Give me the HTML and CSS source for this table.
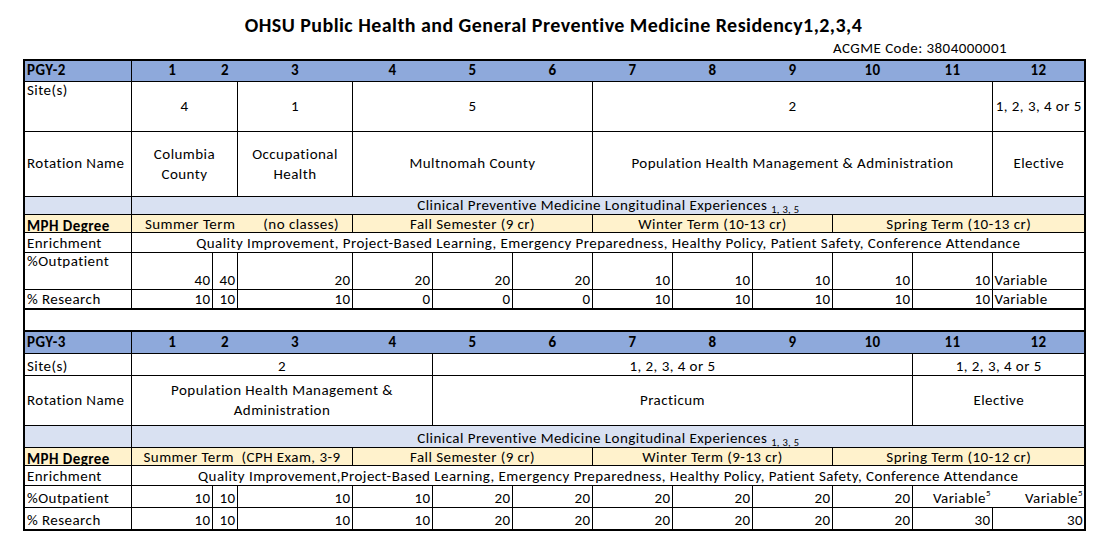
FILE: index.html
```html
<!DOCTYPE html>
<html>
<head>
<meta charset="utf-8">
<title>OHSU Public Health and General Preventive Medicine Residency</title>
<link rel="stylesheet" href="styles.css">
</head>
<body>
<div class="sheet">
  <h1 class="title">OHSU Public Health and General Preventive Medicine Residency1,2,3,4</h1>
  <div class="code">ACGME Code: 3804000001</div>
  <table class="grid">
    <colgroup>
      <col class="w-label"><col class="w-1"><col class="w-2"><col class="w-3">
      <col class="w-n"><col class="w-n"><col class="w-n"><col class="w-n">
      <col class="w-n"><col class="w-n"><col class="w-n"><col class="w-n">
      <col class="w-12">
    </colgroup>
    <tbody>
      <!-- PGY-2 -->
      <tr class="r-head">
        <th class="lab">PGY-2</th><th>1</th><th>2</th><th>3</th><th>4</th><th>5</th><th>6</th><th>7</th><th>8</th><th>9</th><th>10</th><th>11</th><th class="last">12</th>
      </tr>
      <tr class="r-site2">
        <td class="lab top">Site(s)</td>
        <td colspan="2" class="ctr mid">4</td>
        <td class="ctr mid">1</td>
        <td colspan="3" class="ctr mid">5</td>
        <td colspan="5" class="ctr mid">2</td>
        <td class="ctr mid">1, 2, 3, 4 or 5</td>
      </tr>
      <tr class="r-rot2">
        <td class="lab mid">Rotation Name</td>
        <td colspan="2" class="ctr mid wrap">Columbia<br>County</td>
        <td class="ctr mid wrap">Occupational<br>Health</td>
        <td colspan="3" class="ctr mid">Multnomah County</td>
        <td colspan="5" class="ctr mid">Population Health Management &amp; Administration</td>
        <td class="ctr mid">Elective</td>
      </tr>
      <tr class="r-clin r-clin2">
        <td class="lab"></td>
        <td colspan="12" class="ctr">Clinical Preventive Medicine Longitudinal Experiences<sub>1, 3, 5</sub></td>
      </tr>
      <tr class="r-mph">
        <td class="lab"><div class="mph-label">MPH Degree</div></td>
        <td colspan="3" class="ctr"><span>Summer Term</span><span class="gap">(no classes)</span></td>
        <td colspan="3" class="ctr">Fall Semester (9 cr)</td>
        <td colspan="3" class="ctr">Winter Term (10-13 cr)</td>
        <td colspan="3" class="ctr">Spring Term (10-13 cr)</td>
      </tr>
      <tr class="r-enr">
        <td class="lab">Enrichment</td>
        <td colspan="12" class="ctr">Quality Improvement, Project-Based Learning, Emergency Preparedness, Healthy Policy, Patient Safety, Conference Attendance</td>
      </tr>
      <tr class="r-out2">
        <td class="lab top">%Outpatient</td>
        <td class="num">40</td><td class="num">40</td><td class="num">20</td><td class="num">20</td><td class="num">20</td><td class="num">20</td>
        <td class="num">10</td><td class="num">10</td><td class="num">10</td><td class="num">10</td><td class="num">10</td>
        <td class="txt">Variable</td>
      </tr>
      <tr class="r-res">
        <td class="lab">% Research</td>
        <td class="num">10</td><td class="num">10</td><td class="num">10</td><td class="num">0</td><td class="num">0</td><td class="num">0</td>
        <td class="num">10</td><td class="num">10</td><td class="num">10</td><td class="num">10</td><td class="num">10</td>
        <td class="txt">Variable</td>
      </tr>
      <tr class="r-blank">
        <td colspan="13"></td>
      </tr>
      <!-- PGY-3 -->
      <tr class="r-head r-head3">
        <th class="lab">PGY-3</th><th>1</th><th>2</th><th>3</th><th>4</th><th>5</th><th>6</th><th>7</th><th>8</th><th>9</th><th>10</th><th>11</th><th class="last">12</th>
      </tr>
      <tr class="r-site3">
        <td class="lab">Site(s)</td>
        <td colspan="4" class="ctr">2</td>
        <td colspan="6" class="ctr">1, 2, 3, 4 or 5</td>
        <td colspan="2" class="ctr">1, 2, 3, 4 or 5</td>
      </tr>
      <tr class="r-rot3">
        <td class="lab mid">Rotation Name</td>
        <td colspan="4" class="ctr mid wrap">Population Health Management &amp;<br>Administration</td>
        <td colspan="6" class="ctr mid">Practicum</td>
        <td colspan="2" class="ctr mid">Elective</td>
      </tr>
      <tr class="r-clin r-clin3">
        <td class="lab"></td>
        <td colspan="12" class="ctr">Clinical Preventive Medicine Longitudinal Experiences<sub>1, 3, 5</sub></td>
      </tr>
      <tr class="r-mph">
        <td class="lab"><div class="mph-label">MPH Degree</div></td>
        <td colspan="3" class="ctr pre">Summer Term  (CPH Exam, 3-9</td>
        <td colspan="3" class="ctr">Fall Semester (9 cr)</td>
        <td colspan="3" class="ctr">Winter Term (9-13 cr)</td>
        <td colspan="3" class="ctr">Spring Term (10-12 cr)</td>
      </tr>
      <tr class="r-enr">
        <td class="lab">Enrichment</td>
        <td colspan="12" class="ctr">Quality Improvement,Project-Based Learning, Emergency Preparedness, Healthy Policy, Patient Safety, Conference Attendance</td>
      </tr>
      <tr class="r-out3">
        <td class="lab">%Outpatient</td>
        <td class="num">10</td><td class="num">10</td><td class="num">10</td><td class="num">10</td><td class="num">20</td><td class="num">20</td>
        <td class="num">20</td><td class="num">20</td><td class="num">20</td><td class="num">20</td>
        <td class="num open-r">Variable<sup>5</sup></td>
        <td class="num open-l">Variable<sup>5</sup></td>
      </tr>
      <tr class="r-res r-res3">
        <td class="lab">% Research</td>
        <td class="num">10</td><td class="num">10</td><td class="num">10</td><td class="num">10</td><td class="num">20</td><td class="num">20</td>
        <td class="num">20</td><td class="num">20</td><td class="num">20</td><td class="num">20</td>
        <td class="num">30</td><td class="num">30</td>
      </tr>
    </tbody>
  </table>
</div>
</body>
</html>
```

FILE: styles.css
```css
html, body {
  margin: 0;
  padding: 0;
  background: #ffffff;
}

body {
  font-family: "Carlito", "Lato", "Open Sans", sans-serif;
  color: #000000;
}

.sheet {
  width: 1061px;
  padding: 13px 0 0 23px;
}

.title {
  margin: 0;
  height: 25px;
  font-size: 20px;
  line-height: 25px;
  font-weight: 700;
  letter-spacing: 0.45px;
  text-align: center;
}

.code {
  height: 21px;
  padding-left: 810px;
  font-size: 15px;
  letter-spacing: 0.45px;
  line-height: 21px;
}

.grid {
  width: 1061px;
  border-collapse: collapse;
  table-layout: fixed;
  border: 2px solid #000000;
  font-size: 15px;
  letter-spacing: 0.45px;
  line-height: 17px;
}

.w-label { width: 107px; }
.w-1 { width: 81px; }
.w-2 { width: 25px; }
.w-3 { width: 115px; }
.w-n { width: 80px; }
.w-12 { width: 93px; }

.grid td,
.grid th {
  padding: 0 1px 0 2px;
  border: 1px solid #000000;
  white-space: nowrap;
  overflow: hidden;
  vertical-align: bottom;
  text-align: left;
  font-weight: 400;
}

.grid .lab { text-align: left; }
.grid .ctr { text-align: center; }
.grid .num { text-align: right; }
.grid .txt { text-align: left; }
.grid .top { vertical-align: top; }
.grid .mid { vertical-align: middle; }
.grid .wrap { line-height: 20px; }
.grid .pre { white-space: pre; }

/* header rows */
.r-head th {
  background: #8ea9db;
  font-weight: 700;
  text-align: center;
  vertical-align: middle;
  border-left: none;
  border-right: none;
}
.r-head th.lab {
  text-align: left;
  border-right: 1px solid #000000;
}
.r-head th.last {
  border-right: 2px solid #000000;
}
.r-head { height: 21px; }
.r-head3 { height: 22px; }

.r-site2 { height: 50px; }
.r-rot2 { height: 65px; }
.r-site3 { height: 22px; }
.r-rot3 { height: 50px; }

.r-clin td { background: #d9e1f2; }
.r-clin2 { height: 17px; }
.r-clin3 { height: 22px; }
.r-clin sub {
  font-size: 10.5px;
  letter-spacing: 0.3px;
  vertical-align: -3px;
  line-height: 0;
  margin-left: 4px;
}

.r-mph { height: 18px; }
.r-mph td { background: #fff2cc; line-height: 16px; }
.mph-label {
  height: 17px;
  overflow: hidden;
  padding-top: 3px;
  box-sizing: border-box;
  font-weight: 700;
  text-decoration: underline;
  line-height: 17px;
}
.gap { margin-left: 28px; }

.r-enr { height: 20px; }
.r-out2 { height: 37px; }
.r-out3 { height: 22px; }
.r-res { height: 20px; }
.r-res3 { height: 23px; }

.r-blank { height: 22px; }
.r-blank td {
  border: 2px solid #000000;
}

.grid td.open-r { border-right: none; }
.grid td.open-l { border-left: none; border-right: none; }

.r-out3 sup {
  font-size: 9px;
  line-height: 0;
  vertical-align: 7px;
}
```
